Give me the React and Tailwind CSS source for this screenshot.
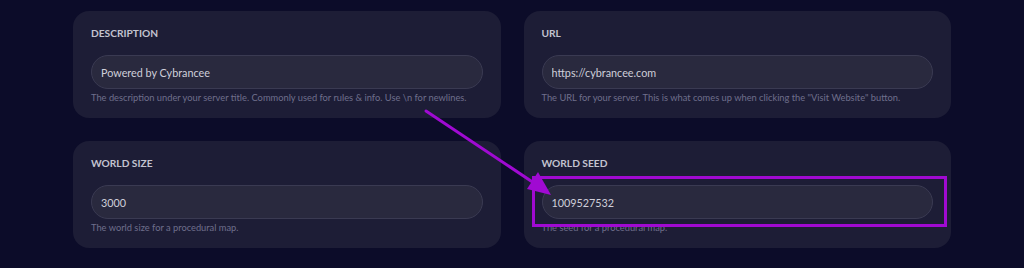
import React from 'react';

const fields = [
    {
        label: "DESCRIPTION",
        value: "Powered by Cybrancee",
        help: "The description under your server title. Commonly used for rules & info. Use \\n for newlines."
    },
    {
        label: "URL",
        value: "https://cybrancee.com",
        help: "The URL for your server. This is what comes up when clicking the \"Visit Website\" button."
    },
    {
        label: "WORLD SIZE",
        value: "3000",
        help: "The world size for a procedural map."
    },
    {
        label: "WORLD SEED",
        value: "1009527532",
        help: "The seed for a procedural map."
    }
];

const FieldCard = ({ label, value, help }) => (
    <div className="rounded-2xl bg-[#1d1d36] px-[18px] pt-[15px] pb-[13px]">
        <div className="text-[10.2px] leading-[14px] font-bold text-[#c3c3d0] mb-[15px]">{label}</div>
        <input
            readOnly
            value={value}
            className="block w-full h-[34px] rounded-full bg-[#29293e] border border-[#3a3a52] px-[9px] text-[10.8px] text-[#cfcfda] outline-none"
        />
        <div className="mt-[2px] text-[9.3px] leading-[14px] whitespace-nowrap text-[#6f6f8c]">{help}</div>
    </div>
);

export default function App() {
    return (
        <div className="relative w-[1024px] h-[268px] bg-[#0c0c29] overflow-hidden" style={{ fontFamily: 'Lato, "Open Sans", sans-serif' }}>
            <div className="pt-[11px] mx-auto w-[878px] grid grid-cols-2 gap-x-[23px] gap-y-[23px]">
                {fields.map((f) => (
                    <FieldCard key={f.label} {...f} />
                ))}
            </div>

            {/* annotation overlay */}
            <svg className="absolute inset-0 pointer-events-none" width="1024" height="268" viewBox="0 0 1024 268">
                <rect x="533.5" y="177.5" width="412" height="48" fill="none" stroke="#a00ad2" strokeWidth="3" />
                <line x1="426" y1="111" x2="540" y2="187" stroke="#a00ad2" strokeWidth="3" strokeLinecap="round" />
                <polygon points="551,195 527,189 538,172" fill="#a00ad2" />
            </svg>
        </div>
    );
}
